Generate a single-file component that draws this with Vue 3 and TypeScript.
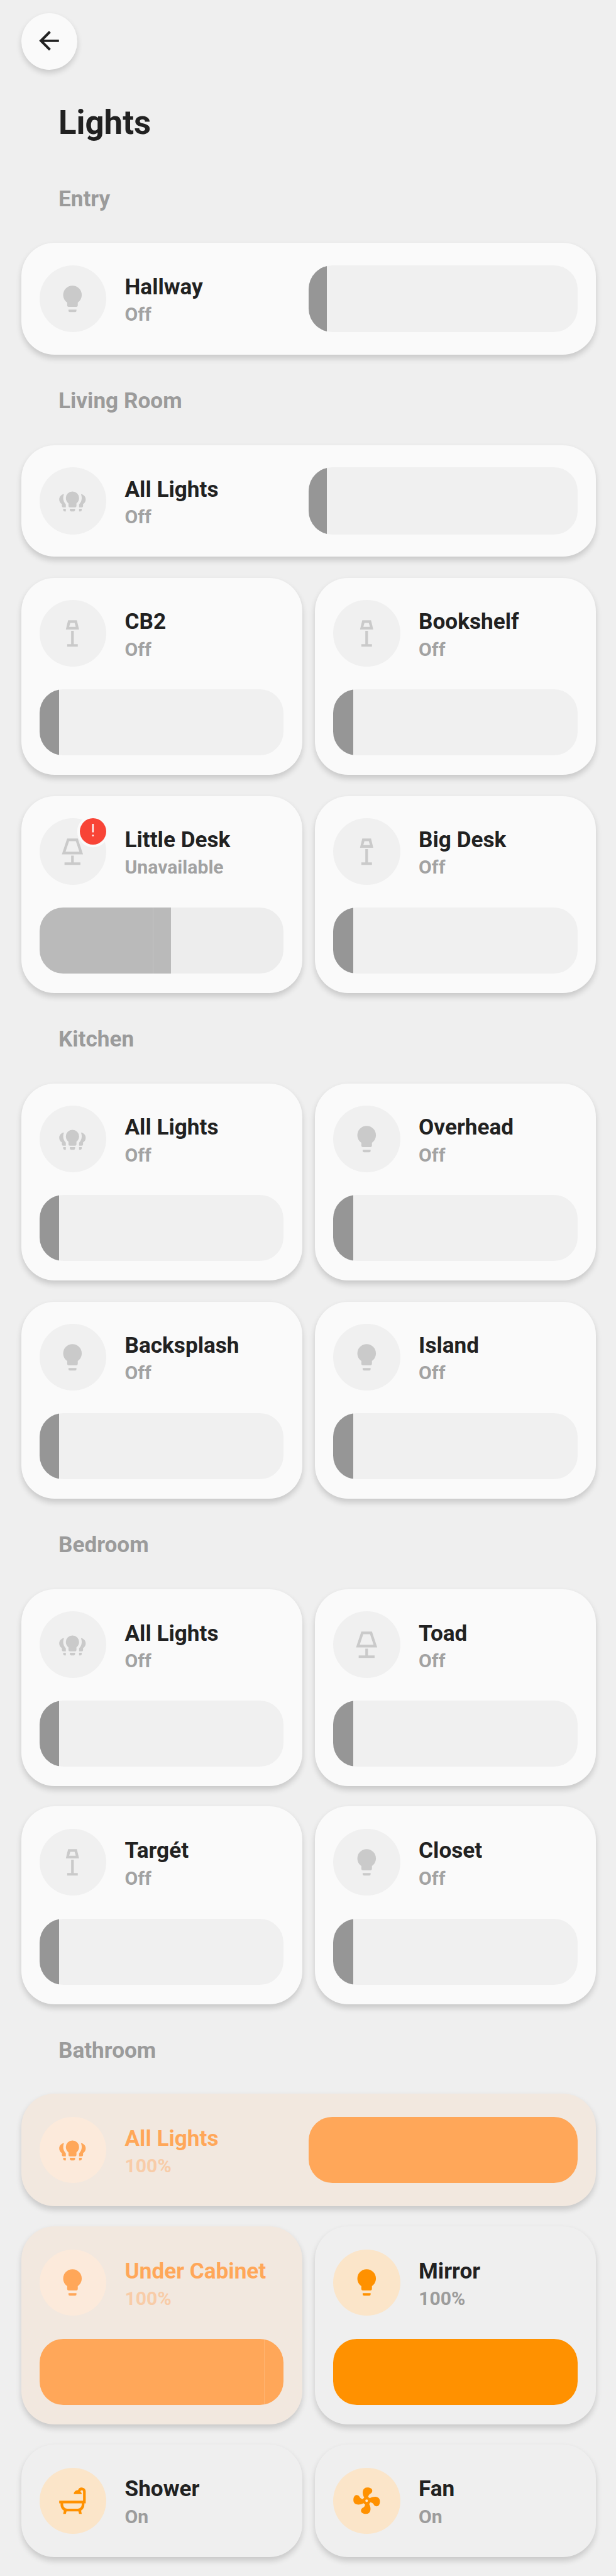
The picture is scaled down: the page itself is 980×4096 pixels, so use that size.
<script setup lang="ts">
type IconName = 'bulb' | 'group' | 'floor' | 'lamp' | 'tub' | 'fan'
type Tone = 'off' | 'warm' | 'on'

interface Device {
  name: string
  state: string
  icon: IconName
  tone: Tone
  wide?: boolean
  level?: number
  seam?: number
  unavailable?: boolean
}

interface Room {
  title: string
  compact?: boolean
  roomy?: boolean
  devices: Device[]
}

const icons: Record<IconName, string> = {
  bulb: 'M12,2A7,7 0 0,0 5,9C5,11.38 6.19,13.47 8,14.74V17A1,1 0 0,0 9,18H15A1,1 0 0,0 16,17V14.74C17.81,13.47 19,11.38 19,9A7,7 0 0,0 12,2M9,21A1,1 0 0,0 10,22H14A1,1 0 0,0 15,21V20H9V21Z',
  group:
    'M12 5A5 5 0 0 0 7 10C7 11.64 7.79 13.09 9 14V16A1 1 0 0 0 10 17H14A1 1 0 0 0 15 16V14C16.21 13.09 17 11.64 17 10A5 5 0 0 0 12 5M10 18V19A1 1 0 0 0 11 20H13A1 1 0 0 0 14 19V18ZM5.6 7.03C3.6 7.2 2 8.9 2 11C2 12.5 2.8 13.8 4 14.5V16A1 1 0 0 0 5 17H7V14.7C5.8 13.5 5 11.8 5 10C5 8.9 5.2 7.9 5.6 7.03M5 18V19A1 1 0 0 0 6 20H7V18ZM18.4 7.03C20.4 7.2 22 8.9 22 11C22 12.5 21.2 13.8 20 14.5V16A1 1 0 0 1 19 17H17V14.7C18.2 13.5 19 11.8 19 10C19 8.9 18.8 7.9 18.4 7.03M19 18V19A1 1 0 0 1 18 20H17V18Z',
  floor: 'M8.7 2L7 9H17L15.3 2ZM10.35 4H13.65L14.5 7H9.5ZM11 10H13V20H16V22H8V20H11Z',
  lamp: 'M8 2H16L20 14H4ZM9.44 4L6.77 12H17.23L14.56 4ZM11 15H13V20H18V22H6V20H11Z',
  tub: 'M22 14V5A3 3 0 0 0 16.2 4C14.4 4 13 5.3 13 7H19C19 6.2 18.6 5.6 18 5.2A1 1 0 0 1 20 5V12H2V14H3V15C3 17.1 4.1 18.7 5.5 19.5L5 22H7L7.5 20H16.5L17 22H19L18.5 19.5C20.1 18.6 21 17 21 15V14ZM19 14V15A3 3 0 0 1 16 18H8A3 3 0 0 1 5 15V14Z',
  fan: 'M12,11A1,1 0 0,0 11,12A1,1 0 0,0 12,13A1,1 0 0,0 13,12A1,1 0 0,0 12,11M12.5,2C17,2 17.11,5.57 14.75,6.75C13.76,7.24 13.32,8.29 13.13,9.22C13.61,9.42 14.03,9.73 14.35,10.13C18.05,8.13 22.03,8.92 22.03,12.5C22.03,17 18.46,17.1 17.28,14.73C16.78,13.74 15.72,13.3 14.79,13.11C14.59,13.59 14.28,14 13.88,14.34C15.87,18.03 15.08,22 11.5,22C7,22 6.91,18.42 9.27,17.24C10.25,16.75 10.69,15.71 10.89,14.79C10.4,14.59 9.97,14.27 9.65,13.87C5.96,15.85 2,15.07 2,11.5C2,7 5.56,6.89 6.74,9.26C7.24,10.25 8.29,10.68 9.22,10.87C9.41,10.39 9.73,9.97 10.14,9.65C8.15,5.96 8.94,2 12.5,2Z',
}

const off = (name: string, icon: IconName, wide = false): Device => ({
  name,
  icon,
  wide,
  state: 'Off',
  tone: 'off',
  level: wide ? 6.85 : 8.05,
})

const rooms: Room[] = [
  { title: 'Entry', devices: [off('Hallway', 'bulb', true)] },
  {
    title: 'Living Room',
    devices: [
      off('All Lights', 'group', true),
      off('CB2', 'floor'),
      off('Bookshelf', 'floor'),
      { name: 'Little Desk', state: 'Unavailable', icon: 'lamp', tone: 'off', level: 53.8, seam: 46.3, unavailable: true },
      off('Big Desk', 'floor'),
    ],
  },
  {
    title: 'Kitchen',
    devices: [
      off('All Lights', 'group'),
      off('Overhead', 'bulb'),
      off('Backsplash', 'bulb'),
      off('Island', 'bulb'),
    ],
  },
  {
    title: 'Bedroom',
    compact: true,
    devices: [
      off('All Lights', 'group'),
      off('Toad', 'lamp'),
      off('Targét', 'floor'),
      off('Closet', 'bulb'),
    ],
  },
  {
    title: 'Bathroom',
    compact: true,
    roomy: true,
    devices: [
      { name: 'All Lights', state: '100%', icon: 'group', tone: 'warm', wide: true, level: 100 },
      { name: 'Under Cabinet', state: '100%', icon: 'bulb', tone: 'warm', level: 100, seam: 92 },
      { name: 'Mirror', state: '100%', icon: 'bulb', tone: 'on', level: 100 },
      { name: 'Shower', state: 'On', icon: 'tub', tone: 'on' },
      { name: 'Fan', state: 'On', icon: 'fan', tone: 'on' },
    ],
  },
]
</script>

<template>
  <main class="page">
    <button class="back" type="button" aria-label="Back">
      <svg viewBox="0 0 24 24">
        <path d="M20,11V13H8L13.5,18.5L12.08,19.92L4.16,12L12.08,4.08L13.5,5.5L8,11H20Z" />
      </svg>
    </button>
    <h1 class="title">Lights</h1>
    <section v-for="room in rooms" :key="room.title">
      <h2 class="room-title" :class="{ snug: room.roomy }">{{ room.title }}</h2>
      <div class="grid" :class="{ compact: room.compact, roomy: room.roomy }">
        <article
          v-for="device in room.devices"
          :key="device.name"
          class="card"
          :class="[device.tone, { wide: device.wide, unavailable: device.unavailable }]"
        >
          <div class="info">
            <div class="icon">
              <svg viewBox="0 0 24 24">
                <path :d="icons[device.icon]" fill-rule="evenodd" />
              </svg>
              <span v-if="device.unavailable" class="badge">
                <svg viewBox="0 0 24 24">
                  <path d="M11 4H13V15H11ZM11 18H13V20H11Z" />
                </svg>
              </span>
            </div>
            <div class="text">
              <div class="name">{{ device.name }}</div>
              <div class="state">{{ device.state }}</div>
            </div>
          </div>
          <div v-if="device.level" class="slider">
            <div class="fill" :style="{ width: device.level + '%' }"></div>
            <div v-if="device.seam" class="seam" :style="{ left: device.seam + '%' }"></div>
          </div>
        </article>
      </div>
    </section>
  </main>
</template>

<style>
html {
  font-size: 8.37607px;
  background: #efefef;
}
</style>

<style scoped>
.page {
  box-sizing: border-box;
  width: 117rem;
  height: 489rem;
  padding: 2.45rem 3.8rem 0 4rem;
  overflow: hidden;
  background: #efefef;
  color: #212121;
  font-family: Roboto, 'Liberation Sans', sans-serif;
}

.back {
  display: flex;
  align-items: center;
  justify-content: center;
  width: 10.7rem;
  height: 10.8rem;
  margin: 0;
  padding: 0 0 0.3rem;
  border: 0;
  border-radius: 50%;
  background: #fafafa;
  box-shadow: 0 0.6rem 1.2rem rgba(0, 0, 0, 0.16);
}

.back svg {
  width: 5.7rem;
  height: 5.7rem;
  fill: #212121;
}

.title {
  box-sizing: border-box;
  height: 15.65rem;
  margin: 0;
  padding: 6.3rem 0 0 7.1rem;
  font-size: 6.3rem;
  font-weight: 700;
  line-height: 7.5rem;
}

.room-title {
  box-sizing: border-box;
  height: 17.2rem;
  margin: 0;
  padding: 6.4rem 0 0 7.1rem;
  color: #9b9b9b;
  font-size: 4.2rem;
  font-weight: 700;
  line-height: 4.9rem;
}

.room-title.snug {
  height: 17rem;
}

.grid {
  display: grid;
  grid-template-columns: 1fr 1fr;
  gap: 4rem 2.45rem;
}

.compact {
  row-gap: 3.8rem;
}

.card {
  box-sizing: border-box;
  display: flex;
  flex-direction: column;
  gap: 4.3rem;
  padding: 4.2rem 3.5rem 3.7rem;
  border-radius: 6.3rem;
  background: #fafafa;
  box-shadow: 0 0.6rem 1.2rem rgba(0, 0, 0, 0.16);
}

.card.wide {
  grid-column: 1 / -1;
  flex-direction: row;
  justify-content: space-between;
  gap: 0;
  padding: 4.25rem 3.5rem;
}

.compact .card:nth-child(n + 3) {
  gap: 4.4rem;
  padding-top: 4.3rem;
}

.info {
  display: flex;
  align-items: center;
  gap: 3.5rem;
}

.icon {
  position: relative;
  display: flex;
  align-items: center;
  justify-content: center;
  width: 12.7rem;
  height: 12.7rem;
  border-radius: 50%;
  background: #f0f0f0;
}

.icon > svg {
  width: 6.04rem;
  height: 6.04rem;
  margin-right: 0.15rem;
  fill: #cacaca;
}

.badge {
  position: absolute;
  top: 0;
  right: 0;
  display: flex;
  justify-content: center;
  width: 5.05rem;
  height: 5.05rem;
  border-radius: 50%;
  background: #f84436;
  box-shadow: 0 0 0 0.5rem #fafafa;
}

.badge svg {
  width: 3.55rem;
  height: 3.55rem;
  margin-top: 0.5rem;
  fill: #fafafa;
}

.text {
  padding-top: 0.68rem;
  white-space: nowrap;
}

.name {
  font-size: 4.2rem;
  font-weight: 700;
  line-height: 5.4rem;
}

.state {
  color: #a2a2a2;
  font-size: 3.6rem;
  font-weight: 700;
  line-height: 5rem;
}

.slider {
  position: relative;
  height: 12.5rem;
  overflow: hidden;
  border-radius: 4.5rem;
  background: #f0f0f0;
}

.wide .slider {
  width: 51.1rem;
  height: 12.7rem;
}

.fill {
  height: 100%;
  background: #969696;
}

.seam {
  position: absolute;
  top: 0;
  width: 1px;
  height: 100%;
  background: rgba(255, 255, 255, 0.16);
}

.unavailable .slider {
  background: #ededed;
}

.unavailable .fill {
  background: #bababa;
}

.roomy .card,
.roomy .card:nth-child(n + 3) {
  gap: 4.5rem;
  padding: 4.4rem 3.5rem 3.7rem;
}

.roomy .card.wide,
.roomy .card:nth-last-child(-n + 2) {
  padding-bottom: 4.5rem;
}

.roomy .icon,
.roomy .slider {
  height: 12.5rem;
}

.warm {
  background: #f2e8df;
  color: #ffa759;
}

.warm .icon {
  background: #fceadb;
}

.warm .icon > svg {
  fill: #ffa759;
}

.warm .fill {
  background: #ffa759;
}

.warm .state {
  color: #f8cca8;
}

.on {
  background: #efefef;
}

.on .icon {
  background: #fbe5c9;
}

.on .icon > svg {
  fill: #ff9100;
}

.on .fill {
  background: #ff9100;
}

.on .state {
  color: #9c9c9c;
}
</style>
